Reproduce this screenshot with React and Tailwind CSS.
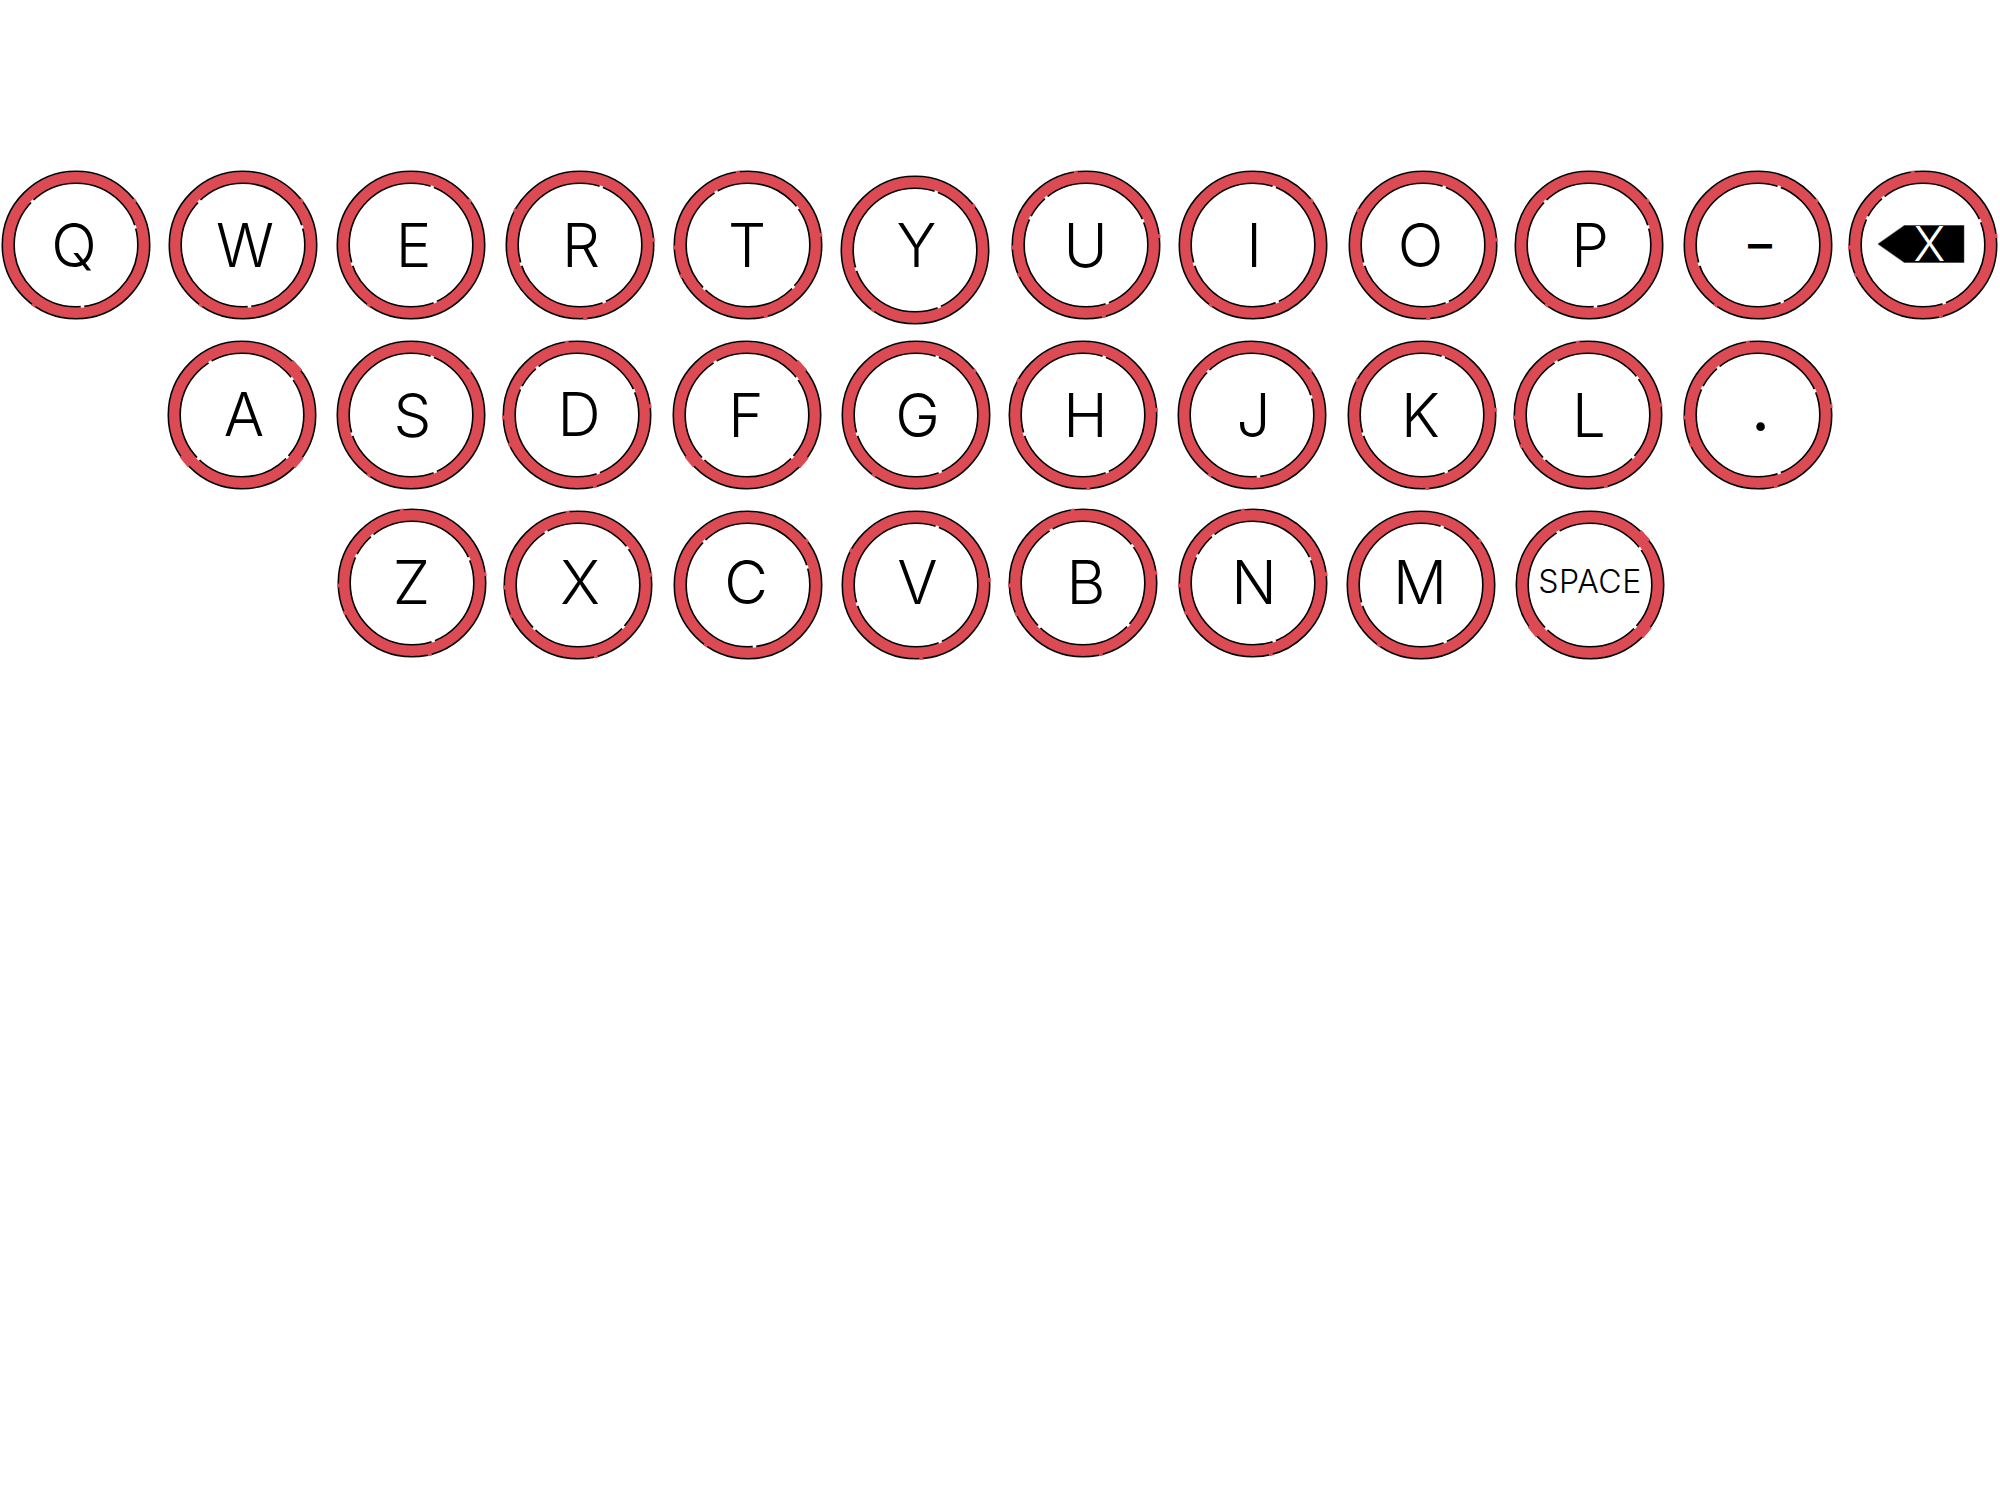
const RED = "#dc4a53";

// ring flavours, angles in degrees (0 = right, clockwise)
// out = red breaks in the outer line, wide = long breaks, inn = white nicks in the inner line
const RINGS = {
  a: { out: [-37, 125], wide: [], inn: [-135, -17, 84] },
  b: { out: [-37, 125], wide: [], inn: [-70, 162, 67] },
  e: { out: [-152, -4, 86], wide: [], inn: [-70, 162, 67] },
  c: { out: [-98, -8, 178, 155, 76], wide: [], inn: [-121, -37, 135, 43] },
  f: { out: [-98, -7, 178, 156, 76], wide: [], inn: [-130, -154, -23, 70] },
  d: { out: [], wide: [-42, 40, 141], inn: [-121, -36, 135, 43] },
};

const polar = (r, deg) => {
  const a = (deg * Math.PI) / 180;
  return [74 + r * Math.cos(a), 74 + r * Math.sin(a)];
};

const Tick = ({ deg, r1, r2, color, width }) => {
  const [x1, y1] = polar(r1, deg);
  const [x2, y2] = polar(r2, deg);
  return <line x1={x1} y1={y1} x2={x2} y2={y2} stroke={color} strokeWidth={width} />;
};

const Ring = ({ kind }) => {
  const ring = RINGS[kind];
  return (
    <svg viewBox="0 0 148 148" className="absolute inset-0 w-[148px] h-[148px] overflow-visible">
      <circle cx="74" cy="74" r="67.5" fill="none" stroke={RED} strokeWidth="11.5" />
      <circle cx="74" cy="74" r="73.7" fill="none" stroke="#000" strokeWidth="1.6" />
      <circle cx="74" cy="74" r="61.8" fill="none" stroke="#000" strokeWidth="1.6" />
      {ring.out.map((d) => (
        <Tick key={d} deg={d} r1={72} r2={75} color={RED} width={4} />
      ))}
      {ring.wide.map((d) => (
        <Tick key={d} deg={d} r1={72} r2={75} color={RED} width={13} />
      ))}
      {ring.inn.map((d) => (
        <Tick key={d} deg={d} r1={60.3} r2={63} color="#fff" width={3.5} />
      ))}
    </svg>
  );
};

const Key = ({ k }) => (
  <div className={`relative w-[148px] h-[148px] shrink-0 flex items-center justify-center ${k.cls}`}>
    <Ring kind={k.ring} />
    {k.back ? (
      <>
        <svg viewBox="0 0 87 38" className="absolute w-[87px] h-[38px] -translate-x-[1.5px] -translate-y-[1px]">
          <path d="M0.3 19 L27 0.3 H86.7 V37.7 H27 Z" fill="#000" stroke="#666" strokeWidth="0.6" />
        </svg>
        <span className="relative text-[48px] leading-none text-white translate-x-[7px] -translate-y-[1px]">X</span>
      </>
    ) : (
      <span className={`relative leading-none text-black ${k.size || "text-[60px]"} ${k.text}`}>{k.t}</span>
    )}
  </div>
);

const ROW1 = [
  { t: "Q", ring: "a", cls: "", text: "-translate-x-[1.5px]" },
  { t: "W", ring: "a", cls: "ml-[19px]", text: "translate-x-[2.5px]" },
  { t: "E", ring: "b", cls: "ml-[20px]", text: "translate-x-[3px]" },
  { t: "R", ring: "e", cls: "ml-[21px]", text: "translate-x-[1.5px]" },
  { t: "T", ring: "c", cls: "ml-[20px]", text: "-translate-x-[0.5px]" },
  { t: "Y", ring: "b", cls: "ml-[19px] mt-[5px]", text: "translate-x-[2px] -translate-y-[5px]" },
  { t: "U", ring: "f", cls: "ml-[23px]", text: "" },
  { t: "I", ring: "b", cls: "ml-[19px]", text: "translate-x-[1.5px]" },
  { t: "O", ring: "e", cls: "ml-[22px]", text: "-translate-x-[2px]" },
  { t: "P", ring: "a", cls: "ml-[18px]", text: "translate-x-[1.5px]" },
  { t: "–", ring: "b", size: "text-[48px]", cls: "ml-[21px]", text: "translate-x-[2.5px] -translate-y-[1px] font-medium" },
  { t: "", back: true, ring: "f", cls: "ml-[17px]" },
];

const ROW2 = [
  { t: "A", ring: "d", cls: "ml-[166.5px]", text: "translate-x-[2px] -translate-y-[1px]" },
  { t: "S", ring: "b", cls: "ml-[21px]", text: "translate-x-[1.5px]" },
  { t: "D", ring: "f", cls: "ml-[18px]", text: "translate-x-[2px] -translate-y-[1px]" },
  { t: "F", ring: "d", cls: "ml-[22px]", text: "-translate-x-[1px] -translate-y-[0.5px]" },
  { t: "G", ring: "b", cls: "ml-[21px]", text: "translate-x-[1.5px]" },
  { t: "H", ring: "e", cls: "ml-[19px]", text: "translate-x-[2.5px]" },
  { t: "J", ring: "a", cls: "ml-[21px]", text: "translate-x-[1.5px]" },
  { t: "K", ring: "e", cls: "ml-[22px]", text: "-translate-x-[1.5px]" },
  { t: "L", ring: "c", cls: "ml-[18px]", text: "translate-x-[1px]" },
  { t: ".", ring: "f", cls: "ml-[22px]", text: "translate-x-[2.5px] -translate-y-[6px] font-medium" },
];

const ROW3 = [
  { t: "Z", ring: "f", cls: "ml-[336px]", text: "-translate-y-[1px]" },
  { t: "X", ring: "c", cls: "ml-[18px] mt-[2px]", text: "translate-x-[2.5px] -translate-y-[3px]" },
  { t: "C", ring: "a", cls: "ml-[22px] mt-[2px]", text: "-translate-x-[1.5px] -translate-y-[3px]" },
  { t: "V", ring: "e", cls: "ml-[20px] mt-[2px]", text: "translate-x-[2px] -translate-y-[3px]" },
  { t: "B", ring: "c", cls: "ml-[19.5px]", text: "translate-x-[3px] -translate-y-[1px]" },
  { t: "N", ring: "f", cls: "ml-[21.5px]", text: "translate-x-[1.5px] -translate-y-[1px]" },
  { t: "M", ring: "b", cls: "ml-[20.5px] mt-[2px]", text: "-translate-x-[1px] -translate-y-[3px]" },
  { t: "SPACE", ring: "d", cls: "ml-[21px] mt-[2px]", size: "text-[32px] font-light tracking-[0.5px]", text: "-translate-y-[3px]" },
];

export default function App() {
  return (
    <div className="w-[2000px] h-[1500px] bg-white font-['Inter',sans-serif] font-[350] text-black overflow-hidden pt-[170.5px]">
      <div className="flex items-start h-[170px] pl-[1.5px]">
        {ROW1.map((k) => (
          <Key key={k.t || "back"} k={k} />
        ))}
      </div>
      <div className="flex items-start h-[168px] pl-[1.5px]">
        {ROW2.map((k) => (
          <Key key={k.t} k={k} />
        ))}
      </div>
      <div className="flex items-start h-[168px] pl-[1.5px]">
        {ROW3.map((k) => (
          <Key key={k.t} k={k} />
        ))}
      </div>
    </div>
  );
}
